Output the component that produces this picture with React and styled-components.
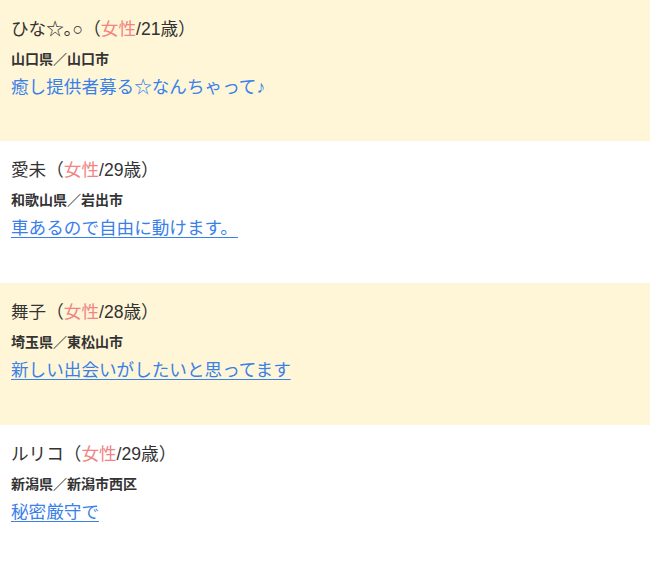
import React from "react";
import styled, { createGlobalStyle } from "styled-components";

const Global = createGlobalStyle`
  html, body { margin: 0; padding: 0; background: #ffffff; }
  body { font-family: "Liberation Sans", "Noto Sans CJK JP", sans-serif; color: #333333; }
`;

const List = styled.div`
  display: flex;
  flex-direction: column;
  width: 650px;
`;

const Item = styled.div`
  background: ${(p) => (p.$alt ? "#fff6d7" : "#ffffff")};
  padding: 15px 11px 0;
  height: ${(p) => p.$h}px;
  box-sizing: border-box;
  display: flex;
  flex-direction: column;
  gap: 5px;
`;

const Name = styled.div`
  font-size: 17.6px;
  line-height: 28px;
  color: #333333;
`;

const Sex = styled.span`
  color: #f08585;
`;

const Place = styled.div`
  font-family: "Noto Sans CJK JP", sans-serif;
  font-size: 14px;
  line-height: 20px;
  font-weight: bold;
  color: #333333;
`;

const Message = styled.a`
  font-size: 17.6px;
  line-height: 28px;
  color: #3a80ea;
  text-decoration: ${(p) => (p.$plain ? "none" : "underline")};
  text-underline-offset: 3px;
  align-self: flex-start;
  cursor: pointer;
`;

const users = [
  { name: "ひな☆｡○", age: 21, place: "山口県／山口市", msg: "癒し提供者募る☆なんちゃって♪", plain: true, h: 141 },
  { name: "愛未", age: 29, place: "和歌山県／岩出市", msg: "車あるので自由に動けます。", h: 142 },
  { name: "舞子", age: 28, place: "埼玉県／東松山市", msg: "新しい出会いがしたいと思ってます", h: 142 },
  { name: "ルリコ", age: 29, place: "新潟県／新潟市西区", msg: "秘密厳守で", h: 141 },
];

export default function App() {
  return (
    <>
      <Global />
      <List>
        {users.map((u, i) => (
          <Item key={i} $alt={i % 2 === 0} $h={u.h}>
            <Name>
              {u.name}（<Sex>女性</Sex>/{u.age}歳）
            </Name>
            <Place>{u.place}</Place>
            <Message $plain={u.plain}>{u.msg}</Message>
          </Item>
        ))}
      </List>
    </>
  );
}
